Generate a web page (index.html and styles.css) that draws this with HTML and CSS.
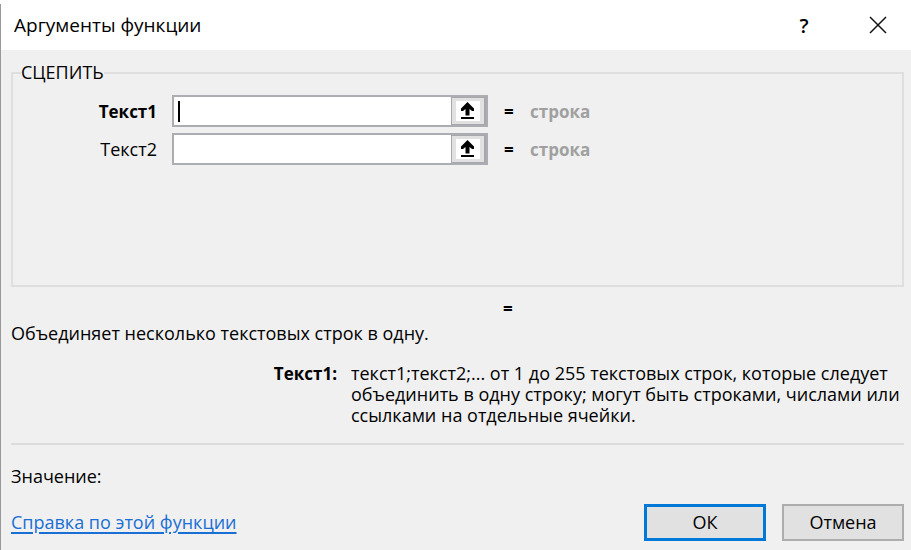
FILE: index.html
```html
<!DOCTYPE html>
<html lang="ru">
<head>
    <meta charset="UTF-8">
    <meta name="viewport" content="width=device-width, initial-scale=1.0">
    <title>Аргументы функции</title>
    <link rel="stylesheet" href="styles.css">
</head>
<body>
    <div class="dialog">
        <header class="titlebar">
            <h1 class="title">Аргументы функции</h1>
            <button type="button" class="title-button" aria-label="Справка">?</button>
            <button type="button" class="title-button" aria-label="Закрыть">
                <svg width="18" height="18" viewBox="0 0 18 18">
                    <path d="M1 1L17 17M17 1L1 17" fill="none" stroke="#111" stroke-width="1.5"/>
                </svg>
            </button>
        </header>
        <form class="content">
            <fieldset class="arguments">
                <legend>СЦЕПИТЬ</legend>
                <div class="row">
                    <label class="row-label required" for="text1">Текст1</label>
                    <div class="field">
                        <input type="text" id="text1">
                        <span class="caret"></span>
                        <button type="button" class="pick" aria-label="Выбрать диапазон">
                            <svg width="26" height="22" viewBox="0 0 26 22">
                                <rect x="1" y="1" width="24" height="20" fill="#fff"/>
                                <path d="M12.500 2L19 8.500V11H17L14.500 9V15.500H10.500V9L8 11H6V8.500Z" fill="#000"/>
                                <rect x="6" y="17" width="13" height="2" fill="#000"/>
                            </svg>
                        </button>
                    </div>
                    <span class="equals">=</span>
                    <span class="type">строка</span>
                </div>
                <div class="row">
                    <label class="row-label" for="text2">Текст2</label>
                    <div class="field">
                        <input type="text" id="text2">
                        <button type="button" class="pick" aria-label="Выбрать диапазон">
                            <svg width="26" height="22" viewBox="0 0 26 22">
                                <rect x="1" y="1" width="24" height="20" fill="#fff"/>
                                <path d="M12.500 2L19 8.500V11H17L14.500 9V15.500H10.500V9L8 11H6V8.500Z" fill="#000"/>
                                <rect x="6" y="17" width="13" height="2" fill="#000"/>
                            </svg>
                        </button>
                    </div>
                    <span class="equals">=</span>
                    <span class="type">строка</span>
                </div>
            </fieldset>
            <p class="result">=</p>
            <p class="description">Объединяет несколько текстовых строк в одну.</p>
            <div class="hint">
                <strong class="hint-name">Текст1:</strong>
                <p class="hint-text">текст1;текст2;... от 1 до 255 текстовых строк, которые следует объединить в одну строку; могут быть строками, числами или ссылками на отдельные ячейки.</p>
            </div>
            <hr class="divider">
            <p class="value">Значение:</p>
            <footer class="footer">
                <a class="help" href="#">Справка по этой функции</a>
                <button type="submit" class="button primary">ОК</button>
                <button type="button" class="button">Отмена</button>
            </footer>
        </form>
    </div>
</body>
</html>
```
FILE: styles.css
```css
* {
    box-sizing: border-box;
}
body {
    margin: 0;
    padding-top: 4px;
    background-color: white;
    color: black;
    font-family: "Open Sans", "Noto Sans", sans-serif;
    font-size: 18px;
    line-height: 21px;
}
button, input {
    font: inherit;
    color: inherit;
    margin: 0;
    padding: 0;
}
p {
    margin: 0;
}
.dialog {
    min-height: calc(100vh - 4px);
    background-color: #f0f0f0;
    border-left: 1px solid #999;
}
.titlebar {
    display: flex;
    align-items: center;
    height: 46px;
    padding: 0 8px 4px 13px;
    background-color: white;
}
.title {
    flex: 1;
    margin: 0;
    font-size: 19px;
    font-weight: normal;
}
.title-button {
    display: flex;
    align-items: center;
    justify-content: center;
    width: 50px;
    height: 38px;
    margin-left: 24px;
    border: none;
    background: none;
    font-size: 20px;
    font-weight: 600;
}
.content {
    padding: 12px 7px 8px 10px;
}
.arguments {
    min-height: 225px;
    margin: 0;
    padding: 12px 8px;
    border: 2px solid #dfdfdf;
}
.arguments legend {
    padding: 0;
}
.row {
    display: flex;
    align-items: center;
    margin-bottom: 6px;
}
.row-label {
    width: 136px;
    margin-right: 15px;
    text-align: right;
}
.required, .type, .hint-name {
    font-size: 17px;
    font-weight: bold;
}
.field {
    position: relative;
    display: flex;
    width: 316px;
    height: 32px;
    border: 2px solid #abadb3;
    background-color: white;
}
.field input {
    flex: 1;
    min-width: 0;
    padding: 0 6px;
    border: none;
    outline: none;
    background: none;
}
.caret {
    position: absolute;
    left: 4px;
    top: 4px;
    width: 2px;
    height: 21px;
    background-color: black;
}
.pick {
    display: flex;
    align-items: center;
    justify-content: center;
    width: 35px;
    border: 1px solid #a8a8ac;
    border-right-width: 2px;
    background-color: #e1e1e1;
}
.equals {
    width: 42px;
    padding-left: 16px;
    font-size: 17px;
    font-weight: bold;
}
.type {
    color: #a0a0a0;
}
.result {
    margin-top: 11px;
    padding-left: 492px;
    font-size: 17px;
    font-weight: bold;
}
.description {
    margin-top: 4px;
}
.hint {
    display: flex;
    margin-top: 19px;
}
.hint-name {
    width: 326px;
    margin-right: 14px;
    text-align: right;
}
.hint-text {
    flex: 1;
}
.divider {
    height: 2px;
    margin: 17px 0 21px;
    border: none;
    background-color: #dcdcdc;
}
.footer {
    display: flex;
    align-items: center;
    gap: 16px;
    margin-top: 17px;
}
.help {
    margin-right: auto;
    color: #1a6fd4;
    text-underline-offset: 3px;
    text-decoration-thickness: 2px;
}
.button {
    width: 122px;
    height: 37px;
    border: 2px solid #adadad;
    background-color: #e1e1e1;
}
.primary {
    border: 3px solid #0078d7;
}
```
